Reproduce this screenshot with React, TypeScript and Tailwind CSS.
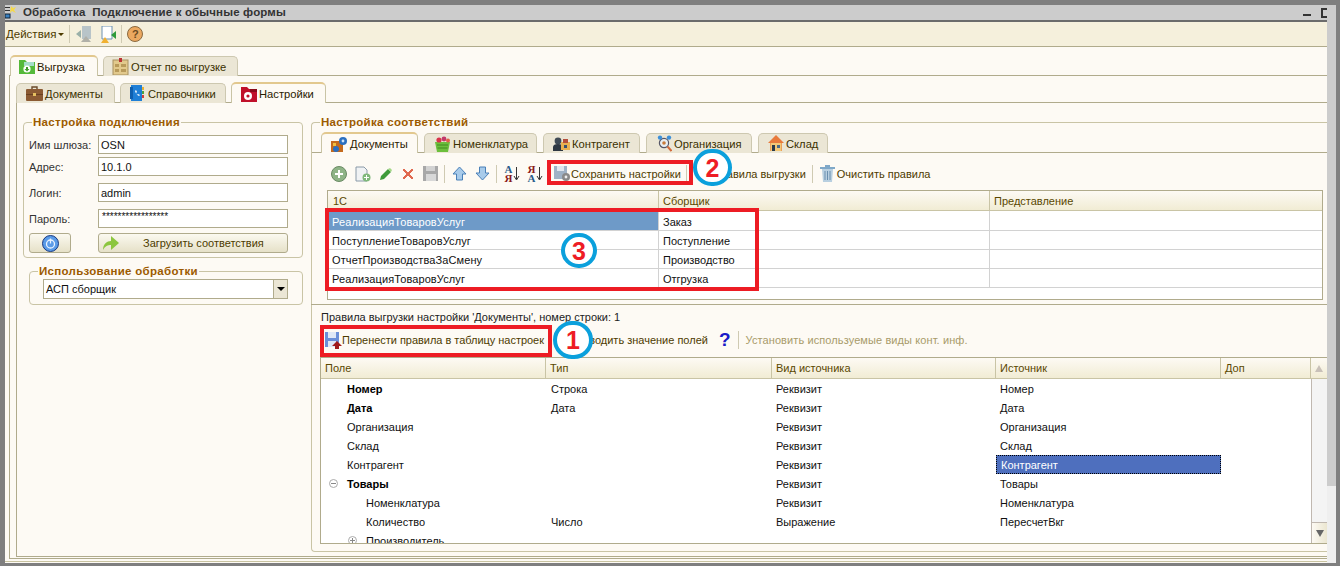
import React from "react";

const Ic = ({ w = 16, h = 16, children, cls = "" }: { w?: number; h?: number; children: React.ReactNode; cls?: string }) => (
  <svg width={w} height={h} viewBox={`0 0 ${w} ${h}`} className={`shrink-0 ${cls}`}>{children}</svg>
);

const FolderGreen = () => (<Ic><path d="M0 1h6l2 2h8v12H0z" fill="#55b93a"/><path d="M5 3h10v4H5z" fill="#a5dcc8"/><circle cx="8" cy="10" r="3.6" fill="#fff"/><path d="M7 8h2v2h1.5L8 12.5 5.5 10H7z" fill="#3f9a2a"/></Ic>);
const Clip = () => (<Ic w={17} h={17}><rect x="1" y="2" width="15" height="15" fill="#e2c98c" stroke="#a89060"/><rect x="7" y="0" width="3" height="4" fill="#b33"/><path d="M3 6h4v3H3zM9 6h5v3H9zM3 11h4v3H3zM9 11h5v3H9z" fill="#b89a5a"/></Ic>);
const Briefcase = () => (<Ic w={17} h={17}><path d="M6 4V2h5v2" fill="none" stroke="#6a4a2a" strokeWidth="1.4"/><rect x="0" y="4" width="17" height="12" rx="1" fill="#8b5a33"/><rect x="0" y="9" width="17" height="1" fill="#6a4020"/><rect x="7" y="8" width="3" height="3" fill="#e5c060"/></Ic>);
const Book = () => (<Ic w={16} h={17}><rect x="1" y="0" width="11" height="16" fill="#1f7fd6"/><rect x="0" y="2" width="3" height="12" fill="#0f5fae"/><path d="M5 6c1 3 2 4 4 5l1-1-2-1-1 1-1-2 1-1-1-2z" fill="#fff"/><rect x="12" y="2" width="2" height="3" fill="#e8b030"/><rect x="12" y="6" width="2" height="3" fill="#50a040"/><rect x="12" y="10" width="2" height="3" fill="#d04040"/></Ic>);
const FolderRed = () => (<Ic w={16} h={15}><path d="M0 0h6l2 2h8v13H0z" fill="#c0102a"/><path d="M9 2h7v3H9z" fill="#8a0a1a"/><circle cx="7" cy="9" r="4" fill="#fff"/><circle cx="7" cy="9" r="1.6" fill="#c0102a"/></Ic>);
const DocsGear = () => (<Ic w={17} h={17}><rect x="0" y="5" width="12" height="11" fill="#c46a1e"/><rect x="2" y="7" width="3" height="3" fill="#f0c040"/><circle cx="12" cy="5" r="4" fill="#2a6fc0"/><circle cx="12" cy="5" r="1.4" fill="#cfe4fa"/><circle cx="5" cy="13" r="3" fill="#2a6fc0"/></Ic>);
const Basket = () => (<Ic w={17} h={16}><path d="M1 6h15l-2 10H3z" fill="#6cbf3c"/><path d="M3 9h11M3.5 12h10" stroke="#3f8a20"/><circle cx="5" cy="4" r="2.6" fill="#d8324a"/><circle cx="10" cy="3" r="2.4" fill="#c23a6a"/><circle cx="14" cy="4.5" r="2" fill="#e0604a"/></Ic>);
const People = () => (<Ic w={17} h={17}><circle cx="5" cy="6" r="3.4" fill="#3f4a55"/><path d="M0 16v-4c0-2 2-3 5-3s5 1 5 3v4z" fill="#2d3742"/><rect x="8" y="7" width="9" height="8" fill="#e9b050"/><rect x="10" y="4" width="5" height="4" fill="#b54d3a"/><rect x="11" y="10" width="3" height="3" fill="#38516e"/></Ic>);
const Org = () => (<Ic w={16} h={17}><circle cx="8" cy="8" r="4.6" fill="#e8eef2" stroke="#556" strokeWidth="1.2"/><path d="M11.5 11.5 15.5 16" stroke="#d26a3c" strokeWidth="2"/><circle cx="4" cy="2.6" r="2.2" fill="#3d8fd8"/><circle cx="13" cy="2.6" r="2.2" fill="#3d8fd8"/><circle cx="8" cy="8" r="1.8" fill="#c87a3a"/></Ic>);
const House = () => (<Ic w={16} h={17}><path d="M8 0 0 8h2v8h12V8h2z" fill="#e87a3c"/><rect x="2.5" y="8" width="11" height="8" fill="#f2c878"/><rect x="4" y="10" width="3" height="6" fill="#2a3a4a"/><rect x="9" y="10" width="3" height="3" fill="#4a6a8a"/></Ic>);

const Tab = ({ label, icon, active, w, pl = "pl-[9px]" }: { label: string; icon: React.ReactNode; active?: boolean; w: string; pl?: string }) => (
  <div className={`${w} ${pl} -mb-px flex items-center gap-[2px] rounded-t-[5px] border border-b-0 text-[11.2px] ${active ? "h-[21px] bg-[#fdfaf4] border-[#c9c4a5] border-t-2 border-t-[#e2c88e] text-[#2a2000] pt-px" : "h-[20px] bg-[#ebe6d5] border-[#cdc8b0] text-[#3a3000] border-b border-b-[#b0ab8c]"}`}>
    {icon}<span className="whitespace-nowrap">{label}</span>
  </div>
);

const Field = ({ label, value, mt, small }: { label: string; value: string; mt: string; small?: boolean }) => (
  <div className={`flex ${mt} items-center`}>
    <span className="w-[69px] text-[#333]">{label}</span>
    {small ? (
      <div className="w-[190px] h-[19px] bg-white border border-[#b0ab8c] pl-[3px] text-[10px] leading-[11px] pt-px text-[#111]">{value}</div>
    ) : (
      <div className="w-[190px] h-[19px] bg-white border border-[#b0ab8c] pl-[2px] flex items-center text-[#111]">{value}</div>
    )}
  </div>
);

const Sep = ({ cls = "" }: { cls?: string }) => <div className={`w-px h-[18px] bg-[#cfcab2] ${cls}`} />;

const Sort = ({ top, bottom, ca, cb, cls }: { top: string; bottom: string; ca: string; cb: string; cls: string }) => (
  <div className={`flex items-center ${cls}`}>
    <div className="w-[9px] flex flex-col items-center text-[11px] leading-[9px] font-bold" style={{ fontFamily: '"Liberation Serif", serif' }}>
      <span className={ca}>{top}</span>
      <span className={cb}>{bottom}</span>
    </div>
    <Ic w={7} h={15}><path d="M3.5 1v12M1 10l2.5 4L6 10" fill="none" stroke="#333" strokeWidth="1"/></Ic>
  </div>
);

const t1 = [
  ["РеализацияТоваровУслуг", "Заказ", true],
  ["ПоступлениеТоваровУслуг", "Поступление", false],
  ["ОтчетПроизводстваЗаСмену", "Производство", false],
  ["РеализацияТоваровУслуг", "Отгрузка", false],
] as const;

const t2: { f: string; b?: boolean; ind: number; t: string; v: string; s: string; sel?: boolean; tree?: string }[] = [
  { f: "Номер", b: true, ind: 26, t: "Строка", v: "Реквизит", s: "Номер" },
  { f: "Дата", b: true, ind: 26, t: "Дата", v: "Реквизит", s: "Дата" },
  { f: "Организация", ind: 26, t: "", v: "Реквизит", s: "Организация" },
  { f: "Склад", ind: 26, t: "", v: "Реквизит", s: "Склад" },
  { f: "Контрагент", ind: 26, t: "", v: "Реквизит", s: "Контрагент", sel: true },
  { f: "Товары", b: true, ind: 26, t: "", v: "Реквизит", s: "Товары", tree: "minus" },
  { f: "Номенклатура", ind: 45, t: "", v: "Реквизит", s: "Номенклатура" },
  { f: "Количество", ind: 45, t: "Число", v: "Выражение", s: "ПересчетВкг" },
  { f: "Производитель", ind: 45, t: "", v: "", s: "", tree: "plus" },
];

const Badge = ({ n, cls }: { n: string; cls: string }) => (
  <div className={`absolute rounded-full border-[4px] border-[#0ba0dc] bg-white flex items-center justify-center text-[#ee1c25] font-bold text-[25px] ${cls}`} style={{ fontFamily: '"Liberation Sans", sans-serif' }}>{n}</div>
);

const Red = ({ cls }: { cls: string }) => <div className={`absolute border-[4px] border-[#ed1c24] ${cls}`} />;

export default function App() {
  return (
    <div className="relative w-[1340px] h-[566px] overflow-hidden bg-[#7f7f7f] flex flex-col text-[11px] leading-[14px]" style={{ fontFamily: '"Liberation Sans", Arial, sans-serif' }}>
      <div className="h-[5px] shrink-0" />
      <div className="h-[558px] shrink-0 flex pl-[5px]">
        <div className="w-[1322px] flex flex-col bg-[#fdfaf4]">
          {/* title */}
          <div className="relative h-[17px] shrink-0 bg-[#cccccc] border-b-2 border-[#6b6b6b] flex items-center pl-[18px] font-bold text-[#333] text-[11.5px] tracking-[0.15px]">
            <span className="-mt-[2px]">Обработка&nbsp;&nbsp;Подключение к обычные формы</span>
            <div className="ml-auto mr-[10px] w-[8px] h-[2px] bg-[#333] mt-[4px]" />
            <div className="w-[6px] h-[10px] border-2 border-r-0 border-[#333]" />
            <svg width="13" height="15" viewBox="0 0 13 15" className="absolute left-0 top-0"><path d="M6 1 8 3 11 2 9 5 11 8 7 6 5 8z" fill="#f5d94a"/><rect x="0" y="2" width="5" height="1" fill="#333"/><rect x="0" y="5" width="5" height="1" fill="#333"/><rect x="0" y="9" width="5" height="4" fill="#3a80c0" stroke="#123"/></svg>
          </div>
          {/* toolbar */}
          <div className="h-[25px] shrink-0 bg-[#f5f0dc] border-b border-[#b0ab8c] flex items-center pl-px text-[#4d3b00]">
            <span className="text-[11.5px]">Действия</span>
            <div className="ml-[2px] w-0 h-0 border-x-[3px] border-x-transparent border-t-[3px] border-t-[#4d3b00]" />
            <Sep cls="ml-[5px]" />
            <Ic w={18} h={16} cls="ml-[6px]"><path d="M6 0h9v13H6z" fill="#b8c4c8"/><path d="M0 8 5 4v8z" fill="#9ab0a8"/><path d="M5 16 10 10l5 6z" fill="#b0b0a8"/></Ic>
            <Ic w={18} h={17} cls="ml-[5px]"><path d="M3 0h10v13H3z" fill="#fff" stroke="#6a90b0"/><path d="M12 9l5-4v8z" fill="#2f9a3a"/><path d="M2 17l4-6 4 6z" fill="#f0b030"/></Ic>
            <Sep cls="ml-[4px]" />
            <div className="ml-[5px] w-[16px] h-[16px] rounded-full bg-[#eba860] border border-[#8a6a40] flex items-center justify-center text-[#6a4a20] font-bold text-[11px]">?</div>
          </div>
          {/* outer tabs */}
          <div className="h-[29px] shrink-0 ml-[4px] pl-px flex items-end gap-[5px] border-b border-[#b0ab8c]">
            <Tab w="w-[88px]" pl="pl-[8px]" label="Выгрузка" icon={<FolderGreen />} active />
            <Tab w="w-[135px]" pl="pl-[8px]" label="Отчет по выгрузке" icon={<Clip />} />
          </div>
          <div className="flex-1 ml-[4px] border-l border-b border-[#b0ab8c] pl-[6px] flex flex-col min-h-0">
            {/* inner tabs */}
            <div className="h-[27px] shrink-0 flex items-end gap-[5px] border-b border-[#b0ab8c]">
              <Tab w="w-[99px]" label="Документы" icon={<Briefcase />} />
              <Tab w="w-[106px]" label="Справочники" icon={<Book />} />
              <Tab w="w-[95px]" label="Настройки" icon={<FolderRed />} active />
            </div>
            <div className="flex-1 border-l border-b border-[#b0ab8c] flex min-h-0 mb-px">
              {/* left column */}
              <div className="w-[286px] pl-[6px] shrink-0">
                <fieldset className="mt-[13px] w-[280px] h-[142px] border border-[#c9c4a5] rounded-[4px] pl-[5px] pr-0 min-w-0">
                  <legend className="ml-[3px] px-px font-bold text-[#9c5b00] text-[11.5px] leading-[13px] tracking-[0.3px]">Настройка подключения</legend>
                  <Field label="Имя шлюза:" value="OSN" mt="mt-[6px]" />
                  <Field label="Адрес:" value="10.1.0" mt="mt-[3px]" />
                  <Field label="Логин:" value="admin" mt="mt-[7px]" />
                  <Field label="Пароль:" value="*****************" mt="mt-[7px]" small />
                  <div className="flex mt-[5px]">
                    <div className="w-[42px] h-[20px] rounded-[3px] border border-[#b0ab8c] bg-gradient-to-b from-[#fbf9f0] to-[#e6e1c8] flex items-center justify-center">
                      <Ic w={17} h={17}><circle cx="8.5" cy="8.5" r="8" fill="#5a9be8" stroke="#1a3a80"/><circle cx="8.5" cy="9" r="4" fill="none" stroke="#e8f2ff" strokeWidth="1.3"/><path d="M8.5 3.5v5" stroke="#e8f2ff" strokeWidth="1.3"/></Ic>
                    </div>
                    <div className="ml-[27px] w-[190px] h-[20px] rounded-[3px] border border-[#b0ab8c] bg-gradient-to-b from-[#fbf9f0] to-[#e6e1c8] flex items-center pl-[3px] text-[#4d3b00]">
                      <Ic w={18} h={16}><path d="M1 15C1 9 5 6 9 6V1l8 7-8 7v-5c-3 0-6 1-8 5z" fill="#8cc63f"/></Ic>
                      <span className="ml-[23px]">Загрузить соответствия</span>
                    </div>
                  </div>
                </fieldset>
                <fieldset className="mt-[7px] ml-[6px] w-[274px] h-[40px] border border-[#c9c4a5] rounded-[4px] pl-[13px] min-w-0">
                  <legend className="-ml-[5px] px-px font-bold text-[#9c5b00] text-[11.5px] leading-[13px] tracking-[0.3px]">Использование обработки</legend>
                  <div className="w-[245px] h-[20px] mt-[1px] bg-white border border-[#b0ab8c] flex items-center pl-[2px] text-[#111]">
                    АСП сборщик
                    <div className="ml-auto w-[14px] h-full bg-[#ebe6d5] border-l border-[#b0ab8c] flex items-center justify-center"><div className="w-0 h-0 border-x-[4px] border-x-transparent border-t-[4px] border-t-black" /></div>
                  </div>
                </fieldset>
              </div>
              {/* right column */}
              <fieldset className="mt-[13px] mb-[4px] ml-[8px] w-[1016px] border border-r-0 border-[#c9c4a5] rounded-l-[4px] min-w-0 flex flex-col">
                <legend className="ml-[8px] px-px font-bold text-[#9c5b00] text-[11.5px] leading-[13px] tracking-[0.3px]">Настройка соответствий</legend>
                <div className="h-[26px] shrink-0 pl-[9px] flex items-end gap-[6px] border-b border-[#b0ab8c] -mt-[2px]">
                  <Tab w="w-[97px]" label="Документы" icon={<DocsGear />} active />
                  <Tab w="w-[113px]" label="Номенклатура" icon={<Basket />} />
                  <Tab w="w-[97px]" label="Контрагент" icon={<People />} />
                  <Tab w="w-[106px]" label="Организация" icon={<Org />} />
                  <Tab w="w-[70px]" label="Склад" icon={<House />} />
                </div>
                {/* toolbar 1 */}
                <div className="h-[37px] shrink-0 pt-[4px] pl-[19px] flex items-center text-[#4d3b00]">
                  <Ic w={16} h={16}><circle cx="8" cy="8" r="7.5" fill="#8fb487" stroke="#6a8a64"/><path d="M7 4h2v3h3v2H9v3H7V9H4V7h3z" fill="#fff"/></Ic>
                  <Ic w={16} h={16} cls="ml-[8px]"><path d="M1 1h8l3 3v11H1z" fill="#f0f2f4" stroke="#8a9aa8"/><circle cx="11.5" cy="11.5" r="4" fill="#7fb87a"/><path d="M11 9h1v2h2v1h-2v2h-1v-2H9v-1h2z" fill="#fff"/></Ic>
                  <Ic w={14} h={14} cls="ml-[8px]"><path d="M1 13l1-4 7-7 3 3-7 7z" fill="#3f9a3a"/><path d="M9 2l2-1 2 2-1 2z" fill="#a5d888"/></Ic>
                  <Ic w={12} h={12} cls="ml-[9px]"><path d="M1 2 2 1 6 5 10 1 11 2 7 6 11 10 10 11 6 7 2 11 1 10 5 6z" fill="#e0694f" stroke="#e0694f" strokeWidth="1"/></Ic>
                  <Ic w={15} h={15} cls="ml-[9px]"><rect x="0" y="0" width="15" height="15" fill="#a8a8a8"/><rect x="3" y="0" width="9" height="5" fill="#d2d2d2"/><rect x="3" y="8" width="10" height="7" fill="#d8d8d8"/></Ic>
                  <Sep cls="ml-[6px]" />
                  <Ic w={15} h={15} cls="ml-[7px]"><path d="M7.5 1 14 8h-3.5v6h-6V8H1z" fill="#a8cbea" stroke="#4a80b8"/></Ic>
                  <Ic w={15} h={15} cls="ml-[8px]"><path d="M7.5 14 14 7h-3.5V1h-6v6H1z" fill="#a8cbea" stroke="#4a80b8"/></Ic>
                  <Sep cls="ml-[6px]" />
                  <Sort top="А" bottom="Я" ca="text-[#2a5a8a]" cb="text-[#8a1a1a]" cls="ml-[7px]" />
                  <Sort top="Я" bottom="А" ca="text-[#8a1a1a]" cb="text-[#2a5a8a]" cls="ml-[7px]" />
                  <Sep cls="ml-[5px]" />
                  <Ic w={17} h={16} cls="ml-[5px]"><rect x="0" y="0" width="13" height="13" fill="#9fb2c6"/><rect x="3" y="0" width="7" height="5" fill="#dfe6ee"/><circle cx="12" cy="11" r="4" fill="#8a8a8a"/><circle cx="12" cy="11" r="1.4" fill="#eee"/></Ic>
                  <span className="whitespace-nowrap">Сохранить настройки</span>
                  <Sep cls="ml-[5px]" />
                  <span className="ml-[26px] whitespace-nowrap">Правила выгрузки</span>
                  <Sep cls="ml-[6px]" />
                  <Ic w={15} h={17} cls="ml-[7px]"><rect x="0" y="2" width="15" height="2" fill="#7fa8c8"/><rect x="5" y="0" width="5" height="2" fill="#7fa8c8"/><path d="M2 4h11l-1 13H3z" fill="#b8cfe0"/><path d="M5 6v9M7.5 6v9M10 6v9" stroke="#6a8fae"/></Ic>
                  <span className="ml-[2px] whitespace-nowrap">Очистить правила</span>
                </div>
                {/* table 1 */}
                <div className="ml-[15px] w-[996px] h-[110px] shrink-0 border border-[#b0ab8c] bg-white overflow-hidden">
                  <div className="h-[20px] grid grid-cols-[331px_331px_1fr] bg-gradient-to-b from-[#fdfaf4] to-[#f1ecd4] border-b border-[#c9c4a5] text-[#5a4800] items-center">
                    <div className="pl-[5px] border-r border-[#c9c4a5] h-full flex items-center">1С</div>
                    <div className="pl-[4px] border-r border-[#c9c4a5] h-full flex items-center">Сборщик</div>
                    <div className="pl-[4px]">Представление</div>
                  </div>
                  {t1.map(([a, b, s], i) => (
                    <div key={i} className={`${i === 0 ? "h-[20px]" : "h-[19px]"} grid grid-cols-[331px_331px_1fr] border-b border-[#d2d2d2] items-center text-[#111]`}>
                      <div className={`pl-[4px] pt-[2px] h-full flex items-center border-r border-[#d2d2d2] tracking-[0.1px] ${s ? "bg-[#6e9ac8] text-white" : ""}`}>{a}</div>
                      <div className="pl-[4px] pt-[2px] h-full flex items-center border-r border-[#d2d2d2]">{b}</div>
                      <div />
                    </div>
                  ))}
                </div>
                <div className="-ml-px h-[5px] shrink-0 border-b border-[#b0ab8c]" />
                <div className="pl-[9px] mt-[5px] text-[#222] h-[14px] shrink-0">Правила выгрузки настройки 'Документы', номер строки: 1</div>
                {/* toolbar 2 */}
                <div className="h-[28px] shrink-0 mt-[2px] pl-[13px] flex items-center text-[#4d3b00]">
                  <Ic w={17} h={17}><rect x="0" y="0" width="14" height="15" fill="#6a8fd8"/><rect x="3" y="0" width="8" height="6" fill="#dfe8f6"/><rect x="3" y="9" width="8" height="6" fill="#dfe8f6"/><path d="M12 9 17 14h-3v3h-4v-3H7z" fill="#a01a1a"/></Ic>
                  <span className="whitespace-nowrap tracking-[-0.03px]">Перенести правила в таблицу настроек</span>
                  <span className="ml-[30px] whitespace-nowrap">Выводить значение полей</span>
                  <span className="ml-[11px] text-[#1a1ac8] font-bold text-[19px]">?</span>
                  <Sep cls="ml-[7px]" />
                  <span className="ml-[7px] whitespace-nowrap tracking-[0.1px] text-[#a89a6a]">Установить используемые виды конт. инф.</span>
                </div>
                {/* table 2 */}
                <div className="flex-1 flex flex-col min-h-0 mt-[3px] mb-[7px] ml-[8px] border-t border-b border-l border-[#b0ab8c] bg-white overflow-hidden">
                  <div className="h-[21px] flex shrink-0 bg-gradient-to-b from-[#fdfaf4] to-[#f1ecd4] border-b border-[#c9c4a5] text-[#5a4800]">
                    {([["w-[225px]", "Поле"], ["w-[226px]", "Тип"], ["w-[224px]", "Вид источника"], ["w-[225px]", "Источник"], ["w-[90px]", "Доп"]] as const).map(([w, l]) => (
                      <div key={l} className={`${w} pl-[4px] border-r border-[#c9c4a5] flex items-center`}>{l}</div>
                    ))}
                    <div className="flex-1 flex items-center justify-center"><div className="w-0 h-0 border-x-[4px] border-x-transparent border-b-[7px] border-b-[#c8c0b8]" /></div>
                  </div>
                  <div className="flex-1 flex min-h-0">
                    <div className="w-[990px] overflow-hidden text-[#111]">
                      {t2.map((r) => (
                        <div key={r.f} className="h-[19px] flex items-center relative">
                          <div className="w-[225px] flex items-center" style={{ paddingLeft: r.ind }}>
                            {r.tree && (
                              <div className="absolute w-[9px] h-[9px] rounded-full border border-[#aaa] flex items-center justify-center" style={{ left: r.tree === "plus" ? 27 : 8 }}>
                                <div className="w-[5px] h-px bg-[#888]" />
                                {r.tree === "plus" && <div className="absolute w-px h-[5px] bg-[#888]" />}
                              </div>
                            )}
                            <span className={r.b ? "font-bold text-black" : ""}>{r.f}</span>
                          </div>
                          <div className="w-[226px] pl-[5px]">{r.t}</div>
                          <div className="w-[224px] pl-[4px]">{r.v}</div>
                          <div className={`w-[225px] h-[19px] pl-[4px] flex items-center ${r.sel ? "bg-[#4e6fbe] text-white border border-dotted border-black" : ""}`}>{r.s}</div>
                        </div>
                      ))}
                    </div>
                    <div className="flex-1 bg-[#f4f4f4] border-l border-[#c0b8b0] flex flex-col justify-end">
                      <div className="h-[21px] bg-gradient-to-r from-[#fdfaf4] to-[#ebe6d0] border-t border-[#c0b8b0] flex items-center justify-center"><div className="w-0 h-0 border-x-[4px] border-x-transparent border-t-[7px] border-t-[#666]" /></div>
                    </div>
                  </div>
                </div>
              </fieldset>
            </div>
          </div>
          <div className="h-[4px] shrink-0 pt-[2px]"><div className="h-px bg-[#c8c3a0]" /></div>
        </div>
        <div className="w-[9px] flex flex-col bg-[#efefef]">
          <div className="h-[481px] bg-[#cccccc]" />
        </div>
      </div>
      <Red cls="left-[547px] top-[160px] w-[146px] h-[25px]" />
      <Red cls="left-[325px] top-[208px] w-[434px] h-[83px]" />
      <Red cls="left-[320px] top-[325px] w-[232px] h-[32px]" />
      <Badge n="2" cls="left-[693px] top-[149px] w-[39px] h-[37px]" />
      <Badge n="3" cls="left-[561px] top-[233px] w-[36px] h-[35px]" />
      <Badge n="1" cls="left-[553px] top-[321px] w-[40px] h-[38px]" />
    </div>
  );
}
